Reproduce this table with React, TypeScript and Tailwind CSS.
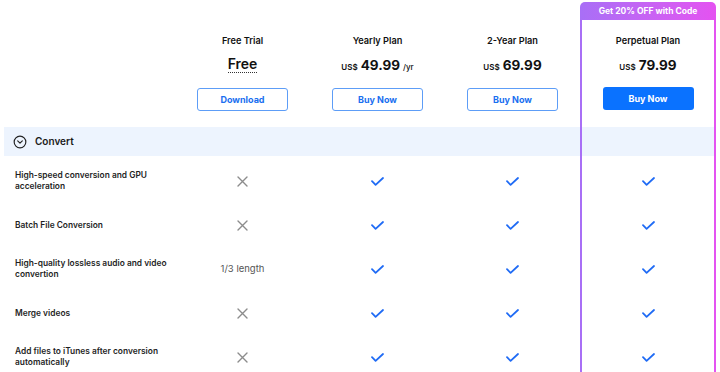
import { CircleChevronDown } from 'lucide-react';

type Cell = 'yes' | 'no' | string;

interface Plan {
  name: string;
  price: string;
  currency?: string;
  suffix?: string;
  action: string;
  featured?: boolean;
}

const plans: Plan[] = [
  { name: 'Free Trial', price: 'Free', action: 'Download' },
  { name: 'Yearly Plan', price: '49.99', currency: 'US$', suffix: '/yr', action: 'Buy Now' },
  { name: '2-Year Plan', price: '69.99', currency: 'US$', action: 'Buy Now' },
  { name: 'Perpetual Plan', price: '79.99', currency: 'US$', action: 'Buy Now', featured: true },
];

const features: { label: string; values: Cell[] }[] = [
  { label: 'High-speed conversion and GPU acceleration', values: ['no', 'yes', 'yes', 'yes'] },
  { label: 'Batch File Conversion', values: ['no', 'yes', 'yes', 'yes'] },
  { label: 'High-quality lossless audio and video convertion', values: ['1/3 length', 'yes', 'yes', 'yes'] },
  { label: 'Merge videos', values: ['no', 'yes', 'yes', 'yes'] },
  { label: 'Add files to iTunes after conversion automatically', values: ['no', 'yes', 'yes', 'yes'] },
];

function CheckIcon() {
  return (
    <svg width="13" height="9" viewBox="0 0 13 9" fill="none">
      <path d="M1 4.2 L4.6 7.8 L12 1" stroke="#1f6bf5" strokeWidth="1.8" strokeLinecap="round" strokeLinejoin="round" />
    </svg>
  );
}

function CrossIcon() {
  return (
    <svg width="11" height="11" viewBox="0 0 11 11" fill="none">
      <path d="M1 1 L10 10 M10 1 L1 10" stroke="#8c8c8c" strokeWidth="1.4" strokeLinecap="round" />
    </svg>
  );
}

function ValueCell({ value }: { value: Cell }) {
  return (
    <div className="h-[44px] flex items-center justify-center">
      {value === 'yes' ? <CheckIcon /> : value === 'no' ? <CrossIcon /> : (
        <span className="text-[9.5px] text-[#555]">{value}</span>
      )}
    </div>
  );
}

function PlanHeader({ plan }: { plan: Plan }) {
  return (
    <div className="flex flex-col items-center">
      <div className="h-[16px] flex items-center text-[9.2px] font-semibold text-[#111]">{plan.name}</div>
      <div className="mt-[6px] h-[22px] flex items-baseline justify-center gap-[3px] text-[#111]">
        {plan.currency ? (
          <>
            <span className="text-[8px] font-semibold">{plan.currency}</span>
            <span className="text-[13.5px] font-bold">{plan.price}</span>
            {plan.suffix && <span className="text-[8px] font-medium">{plan.suffix}</span>}
          </>
        ) : (
          <span className="text-[14px] font-semibold leading-[17px] border-b border-dotted border-[#333]">{plan.price}</span>
        )}
      </div>
      <button
        className={`w-[91px] h-[23px] rounded-[3px] text-[9px] font-bold ${
          plan.featured
            ? 'mt-[10px] bg-[#0a72ff] text-white'
            : 'mt-[11px] border border-[#5d9df7] text-[#1a6ff0] bg-white'
        }`}
      >
        {plan.action}
      </button>
    </div>
  );
}

function PlanColumn({ plan, index }: { plan: Plan; index: number }) {
  const body = (
    <>
      <div className="h-[29px] bg-[#edf4fe]" />
      <div className="mt-[3px]">
        {features.map((f) => (
          <ValueCell key={f.label} value={f.values[index]} />
        ))}
      </div>
    </>
  );

  if (plan.featured) {
    return (
      <div className="w-[136px] shrink-0 mt-[2px] rounded-t-[5px] bg-gradient-to-r from-[#a86ff6] to-[#e452f1] px-[2px]">
        <div className="h-[18px] flex items-center justify-center text-[8.5px] font-bold text-white">
          Get 20% OFF with Code
        </div>
        <div className="bg-white">
          <div className="h-[107px] pt-[13px]">
            <PlanHeader plan={plan} />
          </div>
          {body}
        </div>
      </div>
    );
  }

  return (
    <div className="w-[135px] shrink-0">
      <div className="h-[127px] pt-[33px]">
        <PlanHeader plan={plan} />
      </div>
      {body}
    </div>
  );
}

export default function App() {
  return (
    <div className="w-[720px] h-[372px] overflow-hidden bg-white pl-[4px] flex items-start font-['Inter',sans-serif]">
      <div className="w-[171px] shrink-0">
        <div className="h-[127px]" />
        <div className="h-[29px] bg-[#edf4fe] flex items-center gap-[8px] pl-[9px]">
          <CircleChevronDown className="w-[14px] h-[14px] text-[#222]" strokeWidth={2} />
          <span className="text-[10px] font-semibold text-[#1a1a1a]">Convert</span>
        </div>
        <div className="mt-[3px]">
          {features.map((f) => (
            <div key={f.label} className="h-[44px] flex items-center pl-[11px] pr-[2px]">
              <span className="text-[8.4px] leading-[11px] font-semibold text-[#1f1f1f]">{f.label}</span>
            </div>
          ))}
        </div>
      </div>
      {plans.map((p, i) => (
        <PlanColumn key={p.name} plan={p} index={i} />
      ))}
    </div>
  );
}
